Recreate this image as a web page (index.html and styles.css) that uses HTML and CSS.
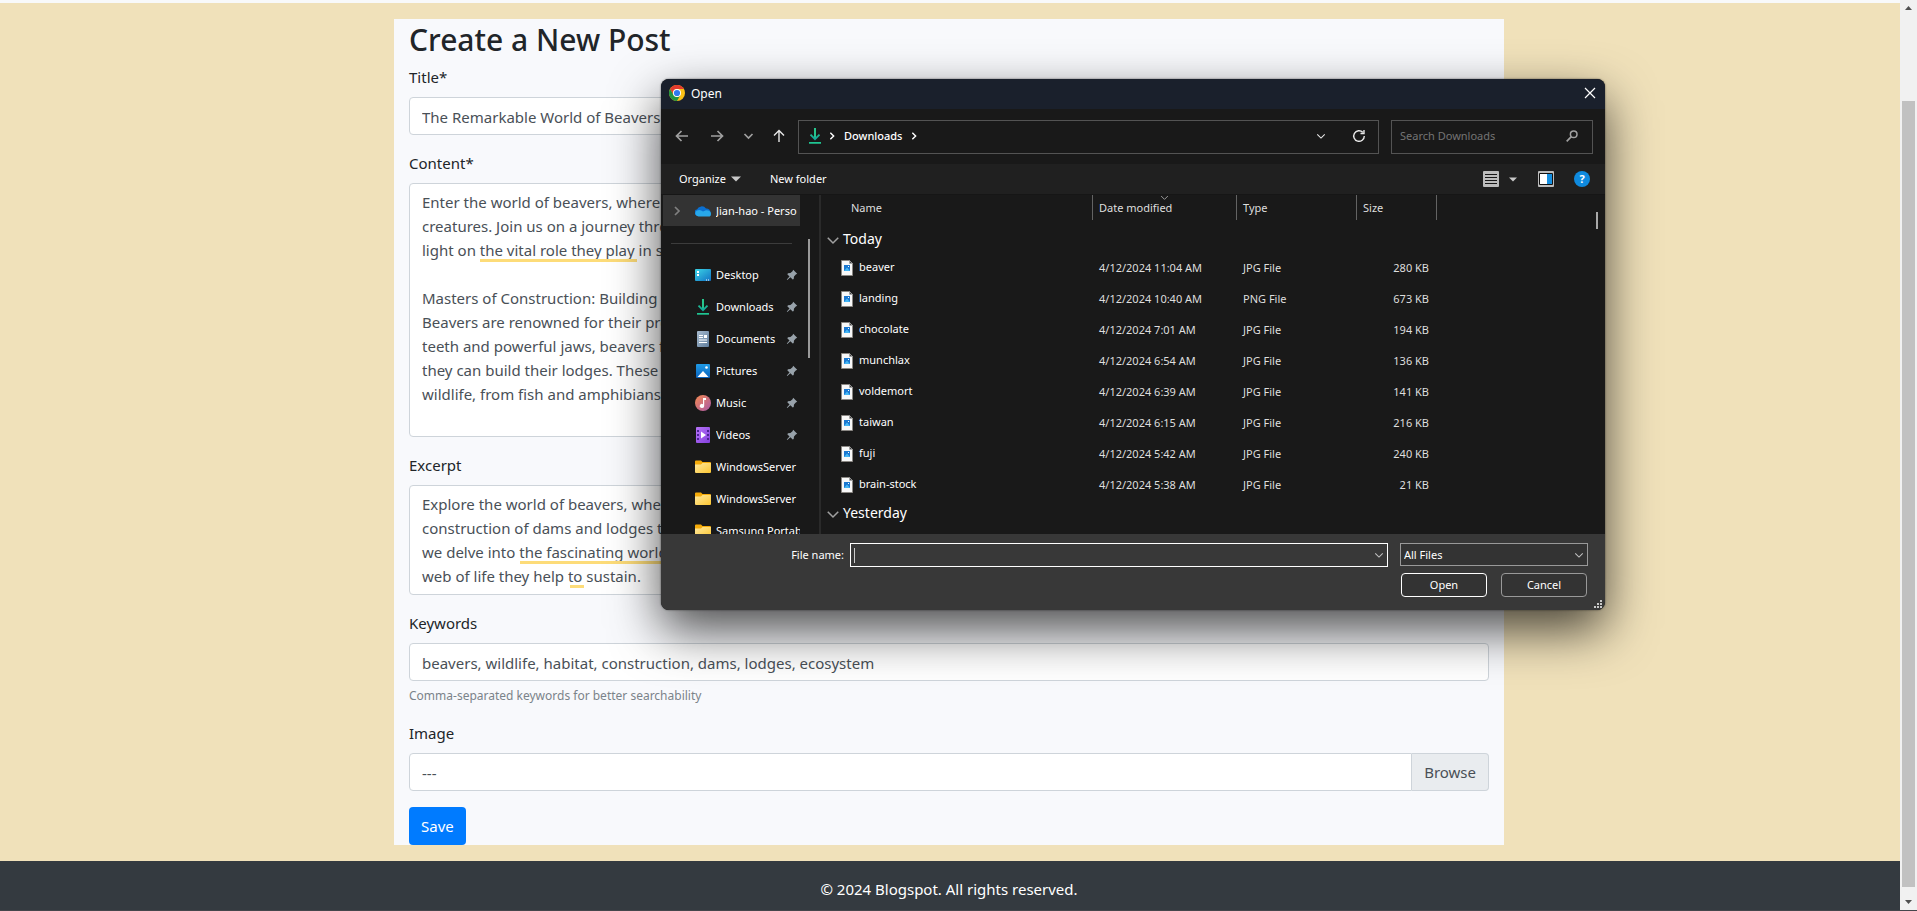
FILE: index.html
```html
<!DOCTYPE html>
<html lang="en">
<head>
<meta charset="utf-8">
<title>Create a New Post</title>
<link rel="stylesheet" href="styles.css">
</head>
<body>
<svg class="defs" aria-hidden="true">
  <defs>
    <linearGradient id="g-dl" x1="0" y1="0" x2="0" y2="1"><stop offset="0" stop-color="#2fd08a"/><stop offset="1" stop-color="#12a89a"/></linearGradient>
    <linearGradient id="g-desk" x1="0" y1="0" x2="1" y2="1"><stop offset="0" stop-color="#3bd5e6"/><stop offset="1" stop-color="#1272c4"/></linearGradient>
    <linearGradient id="g-doc" x1="0" y1="0" x2="1" y2="1"><stop offset="0" stop-color="#a9bccf"/><stop offset="1" stop-color="#5f7d9c"/></linearGradient>
    <linearGradient id="g-pic" x1="0" y1="0" x2="0" y2="1"><stop offset="0" stop-color="#1f9be6"/><stop offset="1" stop-color="#0a62bd"/></linearGradient>
    <linearGradient id="g-mus" x1="0" y1="0" x2="1" y2="1"><stop offset="0" stop-color="#f58a50"/><stop offset="1" stop-color="#a858a8"/></linearGradient>
    <linearGradient id="g-vid" x1="0" y1="0" x2="1" y2="1"><stop offset="0" stop-color="#b673f8"/><stop offset="1" stop-color="#8440dd"/></linearGradient>
    <linearGradient id="g-fold" x1="0" y1="0" x2="1" y2="1"><stop offset="0" stop-color="#ffe9a0"/><stop offset="1" stop-color="#fcc631"/></linearGradient>
    <symbol id="i-download" viewBox="0 0 16 16"><path d="M8 0v11M3.500 6.700 8 11.200l4.500-4.500" fill="none" stroke="url(#g-dl)" stroke-width="1.800"/><path d="M7.100 0h1.800v9H7.100z" fill="#28c78e"/><path d="M2 14h12v1.700H2z" fill="#1fc592"/></symbol>
    <symbol id="i-desktop" viewBox="0 0 16 16"><rect y="2" width="16" height="12" rx="1" fill="url(#g-desk)"/><path d="M2 4h2v2H2zM2 7h2v2H2zM11 12.500h1v1h-1zM13 12.500h1v1h-1z" fill="#fff"/></symbol>
    <symbol id="i-document" viewBox="0 0 16 16"><rect x="2" width="12" height="16" rx="1" fill="url(#g-doc)"/><path d="M4 4h4v1H4zM4 6h4v1H4zM9 4h3v3H9zM4 8.500h8v1H4zM4 11h8v1H4z" fill="#fff"/></symbol>
    <symbol id="i-picture" viewBox="0 0 16 16"><rect x="1" y="1" width="14" height="14" rx="1" fill="url(#g-pic)"/><path d="M2.500 14 8 8l5.500 6z" fill="#fff"/><circle cx="11.500" cy="4.500" r="1.300" fill="#fff"/></symbol>
    <symbol id="i-music" viewBox="0 0 16 16"><circle cx="8" cy="8" r="8" fill="url(#g-mus)"/><path d="M8 3h3v2H9.200v6a2.200 2 0 1 1-1.200-1.800z" fill="#fff"/></symbol>
    <symbol id="i-video" viewBox="0 0 16 16"><rect x="1" width="14" height="16" rx="1" fill="url(#g-vid)"/><path d="M2 3h2v2H2zM2 7h2v2H2zM2 11h2v2H2zM12 3h2v2h-2zM12 7h2v2h-2zM12 11h2v2h-2z" fill="#4a2391"/><path d="m6 4.500 5 3.500-5 3.500z" fill="#fff"/></symbol>
    <symbol id="i-folder" viewBox="0 0 16 16"><path d="M0 2.500Q0 1.500 1 1.500h5l1.500 1.500H15q1 0 1 1V8H0z" fill="#f5ab09"/><path d="M0 5.500h6L7.500 4H16v9q0 1-1 1H1q-1 0-1-1z" fill="url(#g-fold)"/></symbol>
    <symbol id="i-pin" viewBox="0 0 12 12"><path d="M7.200.8 11.200 4.800 9.800 5.600 8 7.600 7.700 9.900 6.700 10.500 4.400 8.300 1.300 11 .8 10.600 3.500 7.400 1.300 5.200 2 4.200 4.400 4 6.500 2.200z" fill="#98a2aa"/></symbol>
    <symbol id="i-image" viewBox="0 0 12 16"><path d="M.5.500h8l3 3v12H.500z" fill="#f8f8f8" stroke="#8a8783"/><path d="M8.500.500v3h3z" fill="#444" stroke="#aaa" stroke-width=".6"/><path d="M3 5h6v6H3z" fill="#1c78d0"/><path d="m3 11 3-3.500L9 11z" fill="#45b7f4"/><path d="M7 6h1v1H7z" fill="#fff"/></symbol>
    <symbol id="i-down" viewBox="0 0 12 12"><path d="m1.500 4 4.500 4.500L10.500 4" fill="none" stroke="currentColor" stroke-width="1.300"/></symbol>
    <symbol id="i-right" viewBox="0 0 12 12"><path d="m4 2 4 4-4 4" fill="none" stroke="currentColor" stroke-width="1.700"/></symbol>
    <symbol id="i-caret" viewBox="0 0 10 6"><path d="M0 .5h10l-5 5z" fill="currentColor"/></symbol>
  </defs>
</svg>

<div class="window">
  <div class="page">
    <main class="main">
      <form class="card">
        <h1 class="heading">Create a New Post</h1>
        <div class="group">
          <label for="title">Title*</label>
          <input class="control" id="title" type="text" value="The Remarkable World of Beavers: Nature's Engineers">
        </div>
        <div class="group">
          <label for="content">Content*</label>
          <div class="field">
            <textarea class="control" id="content" rows="10" wrap="off">Enter the world of beavers, where
creatures. Join us on a journey through
light on the vital role they play in shaping

Masters of Construction: Building their
Beavers are renowned for their prowess
teeth and powerful jaws, beavers fell
they can build their lodges. These
wildlife, from fish and amphibians</textarea>
            <span class="mark mark-vital"></span>
          </div>
        </div>
        <div class="group">
          <label for="excerpt">Excerpt</label>
          <div class="field">
            <textarea class="control" id="excerpt" rows="4" wrap="off">Explore the world of beavers, where
construction of dams and lodges that
we delve into the fascinating world
web of life they help to sustain.</textarea>
            <span class="mark mark-world"></span>
            <span class="mark mark-to"></span>
          </div>
        </div>
        <div class="group">
          <label for="keywords">Keywords</label>
          <input class="control" id="keywords" type="text" value="beavers, wildlife, habitat, construction, dams, lodges, ecosystem">
          <small class="help">Comma-separated keywords for better searchability</small>
        </div>
        <div class="group">
          <label for="image">Image</label>
          <div class="file">
            <input class="control" id="image" type="text" value="---" readonly>
            <button class="browse" type="button">Browse</button>
          </div>
        </div>
        <button class="save" type="button">Save</button>
      </form>
    </main>
    <footer class="footer">© 2024 Blogspot. All rights reserved.</footer>
  </div>
  <div class="scrollbar" aria-hidden="true">
    <svg width="7" height="4" viewBox="0 0 7 4"><path d="M0 4h7L3.500 0z" fill="#505050"/></svg>
    <div class="thumb"></div>
    <svg width="7" height="4" viewBox="0 0 7 4"><path d="M0 0h7L3.500 4z" fill="#505050"/></svg>
  </div>
</div>

<section class="dialog" role="dialog" aria-label="Open">
  <header class="titlebar">
    <svg width="16" height="16" viewBox="0 0 16 16"><circle cx="8" cy="8" r="8" fill="#fbc116"/><path d="M1.070 4A8 8 0 0 1 14.930 4H8a4 4 0 0 0-3.464 6z" fill="#e33b2e"/><path d="M1.070 4A8 8 0 0 0 8 16l3.464-6A4 4 0 0 1 4.536 10z" fill="#229342"/><circle cx="8" cy="8" r="4" fill="#fff"/><circle cx="8" cy="8" r="3.100" fill="#3079ee"/></svg>
    <h2>Open</h2>
    <button class="icon-btn" type="button" aria-label="Close"><svg width="12" height="12" viewBox="0 0 12 12"><path d="m1 1 10 10M11 1 1 11" stroke="#fff" stroke-width="1.200"/></svg></button>
  </header>

  <div class="nav">
    <div class="arrows">
      <button class="icon-btn dim" type="button" aria-label="Back"><svg width="14" height="14" viewBox="0 0 14 14"><path d="M13 7H1.500M6.500 2l-5 5 5 5" fill="none" stroke="currentColor" stroke-width="1.700"/></svg></button>
      <button class="icon-btn dim" type="button" aria-label="Forward"><svg width="14" height="14" viewBox="0 0 14 14"><path d="M1 7h11.500M7.500 2l5 5-5 5" fill="none" stroke="currentColor" stroke-width="1.700"/></svg></button>
      <button class="icon-btn dim recent" type="button" aria-label="Recent locations"><svg width="11" height="12" viewBox="0 0 11 12"><path d="m1.500 4 4 4 4-4" fill="none" stroke="currentColor" stroke-width="1.700"/></svg></button>
      <button class="icon-btn" type="button" aria-label="Up"><svg width="14" height="14" viewBox="0 0 14 14"><path d="M7 13V1.500M2 6.500l5-5 5 5" fill="none" stroke="currentColor" stroke-width="1.400"/></svg></button>
    </div>
    <div class="address">
      <svg width="16" height="16"><use href="#i-download"/></svg>
      <svg class="crumb" width="10" height="10"><use href="#i-right"/></svg>
      <a href="#">Downloads</a>
      <svg class="crumb" width="10" height="10"><use href="#i-right"/></svg>
      <button class="icon-btn history" type="button" aria-label="Previous locations"><svg width="10" height="10"><use href="#i-down"/></svg></button>
      <button class="icon-btn" type="button" aria-label="Refresh"><svg width="14" height="14" viewBox="0 0 14 14"><path d="M12.300 7A5.300 5.300 0 1 1 10.800 3.300M12 1v3.500H8.500" fill="none" stroke="currentColor" stroke-width="1.400"/></svg></button>
    </div>
    <div class="search">
      <input type="text" placeholder="Search Downloads" aria-label="Search Downloads">
      <svg width="12" height="12" viewBox="0 0 12 12"><circle cx="7.700" cy="4.300" r="3.300" fill="none" stroke="#a0a0a0" stroke-width="1.500"/><path d="M5.300 6.700.7 11.300" stroke="#a0a0a0" stroke-width="1.700"/></svg>
    </div>
  </div>

  <div class="toolbar">
    <button type="button">Organize <svg width="10" height="6"><use href="#i-caret"/></svg></button>
    <button type="button">New folder</button>
    <div class="tools">
      <button class="icon-btn" type="button" aria-label="View"><svg width="16" height="16" viewBox="0 0 16 16"><rect width="16" height="16" rx="1" fill="#bcbcbc"/><path d="M2 3.500h12M2 6.500h12M2 9.500h12M2 12.500h12" stroke="#161616"/></svg></button>
      <button class="icon-btn dim" type="button" aria-label="More views"><svg width="8" height="5"><use href="#i-caret"/></svg></button>
      <button class="icon-btn preview" type="button" aria-label="Preview pane"><svg width="16" height="16" viewBox="0 0 16 16"><rect width="16" height="16" rx="1" fill="#bcbcbc"/><path d="M1.500 2.500h13v11h-13z" fill="#fff" stroke="#111"/><path d="M9 3h5v10H9z" fill="#158fe0"/></svg></button>
      <button class="help-btn" type="button" aria-label="Help">?</button>
    </div>
  </div>

  <div class="body">
    <nav class="side">
      <a class="drive" href="#">
        <svg class="expand" width="12" height="12"><use href="#i-right"/></svg>
        <svg width="16" height="16" viewBox="0 0 16 16"><path d="M3 12.500a3 3 0 0 1-1-6 5 4.500 0 0 1 9-1 4 4 0 0 1 4.500 4z" fill="#0a6fd0"/><path d="M3.500 13.500a3.200 3.200 0 0 1-1.500-6Q5 6 8 8.500l3-1.200q5 0 5 3.500a2.700 2.700 0 0 1-3 2.700z" fill="#28a8ea"/></svg>
        <span>Jian-hao - Perso</span>
      </a>
      <hr>
      <ul>
        <li><a href="#"><svg width="16" height="16"><use href="#i-desktop"/></svg><span>Desktop</span><svg class="pin" width="12" height="12"><use href="#i-pin"/></svg></a></li>
        <li><a href="#"><svg width="16" height="16"><use href="#i-download"/></svg><span>Downloads</span><svg class="pin" width="12" height="12"><use href="#i-pin"/></svg></a></li>
        <li><a href="#"><svg width="16" height="16"><use href="#i-document"/></svg><span>Documents</span><svg class="pin" width="12" height="12"><use href="#i-pin"/></svg></a></li>
        <li><a href="#"><svg width="16" height="16"><use href="#i-picture"/></svg><span>Pictures</span><svg class="pin" width="12" height="12"><use href="#i-pin"/></svg></a></li>
        <li><a href="#"><svg width="16" height="16"><use href="#i-music"/></svg><span>Music</span><svg class="pin" width="12" height="12"><use href="#i-pin"/></svg></a></li>
        <li><a href="#"><svg width="16" height="16"><use href="#i-video"/></svg><span>Videos</span><svg class="pin" width="12" height="12"><use href="#i-pin"/></svg></a></li>
        <li><a href="#"><svg width="16" height="16"><use href="#i-folder"/></svg><span>WindowsServer</span></a></li>
        <li><a href="#"><svg width="16" height="16"><use href="#i-folder"/></svg><span>WindowsServer</span></a></li>
        <li><a href="#"><svg width="16" height="16"><use href="#i-folder"/></svg><span>Samsung Portab</span></a></li>
      </ul>
    </nav>
    <div class="side-scroll"></div>
    <div class="files">
      <table>
        <colgroup><col class="c-name"><col class="c-date"><col class="c-type"><col class="c-size"><col></colgroup>
        <thead>
          <tr><th><span>Name</span></th><th><span>Date modified<svg class="sort" width="9" height="9"><use href="#i-down"/></svg></span></th><th><span>Type</span></th><th><span>Size</span></th><th><span></span></th></tr>
        </thead>
        <tbody>
          <tr class="section"><td colspan="5"><svg width="14" height="14"><use href="#i-down"/></svg>Today</td></tr>
          <tr><td><svg width="12" height="16"><use href="#i-image"/></svg>beaver</td><td>4/12/2024 11:04 AM</td><td>JPG File</td><td>280 KB</td><td></td></tr>
          <tr><td><svg width="12" height="16"><use href="#i-image"/></svg>landing</td><td>4/12/2024 10:40 AM</td><td>PNG File</td><td>673 KB</td><td></td></tr>
          <tr><td><svg width="12" height="16"><use href="#i-image"/></svg>chocolate</td><td>4/12/2024 7:01 AM</td><td>JPG File</td><td>194 KB</td><td></td></tr>
          <tr><td><svg width="12" height="16"><use href="#i-image"/></svg>munchlax</td><td>4/12/2024 6:54 AM</td><td>JPG File</td><td>136 KB</td><td></td></tr>
          <tr><td><svg width="12" height="16"><use href="#i-image"/></svg>voldemort</td><td>4/12/2024 6:39 AM</td><td>JPG File</td><td>141 KB</td><td></td></tr>
          <tr><td><svg width="12" height="16"><use href="#i-image"/></svg>taiwan</td><td>4/12/2024 6:15 AM</td><td>JPG File</td><td>216 KB</td><td></td></tr>
          <tr><td><svg width="12" height="16"><use href="#i-image"/></svg>fuji</td><td>4/12/2024 5:42 AM</td><td>JPG File</td><td>240 KB</td><td></td></tr>
          <tr><td><svg width="12" height="16"><use href="#i-image"/></svg>brain-stock</td><td>4/12/2024 5:38 AM</td><td>JPG File</td><td>21 KB</td><td></td></tr>
          <tr class="section"><td colspan="5"><svg width="14" height="14"><use href="#i-down"/></svg>Yesterday</td></tr>
        </tbody>
      </table>
    </div>
    <div class="list-scroll"></div>
  </div>

  <footer class="actions">
    <label for="filename">File name:</label>
    <div class="combo">
      <span class="text-caret"></span>
      <input id="filename" type="text">
      <svg width="10" height="10"><use href="#i-down"/></svg>
    </div>
    <div class="choices">
      <div class="filter">
        <select aria-label="File type"><option>All Files</option></select>
        <svg width="10" height="10"><use href="#i-down"/></svg>
      </div>
      <div class="buttons">
        <button class="primary" type="button">Open</button>
        <button type="button">Cancel</button>
      </div>
    </div>
    <svg class="grip" width="8" height="8" viewBox="0 0 8 8"><path d="M6 0h2v2H6zM3 3h2v2H3zM6 3h2v2H6zM0 6h2v2H0zM3 6h2v2H3zM6 6h2v2H6z" fill="#c8c8c8"/></svg>
  </footer>
</section>
</body>
</html>
```

FILE: styles.css
```css
* { box-sizing: border-box; }

body {
  margin: 0;
  overflow: hidden;
  font: 15px/24px "Noto Sans", "Open Sans", sans-serif;
  color: #212529;
}

button, input, textarea, select { font: inherit; color: inherit; margin: 0; }
button { background: none; border: 0; padding: 0; }
input, textarea, select { outline: 0; }
a { color: inherit; text-decoration: none; }
svg { display: block; flex: none; }
.defs { position: absolute; width: 0; height: 0; }

/* Blog page */
.window {
  display: flex;
  height: 100vh;
  border-bottom: 1px solid #44464b;
}
.page {
  flex: 1;
  display: flex;
  flex-direction: column;
  min-width: 0;
  border-top: 3px solid #f8f9fa;
  background: #f0e1ba;
}
.main { flex: 1; padding: 16px 2px 16px 0; }
.card {
  max-width: 1110px;
  margin: 0 auto;
  padding: 0 15px;
  background: #f8f9fc;
}
.heading { margin: 0; padding: 2px 0 6px; font-size: 30px; line-height: 38px; font-weight: 500; }
.group { margin-bottom: 16px; }
.group label { display: block; margin-bottom: 8px; }
.control {
  display: block;
  width: 100%;
  padding: 6px 12px;
  border: 1px solid #ced4da;
  border-radius: 4px;
  background: #fff;
  color: #495057;
}
input.control { height: 38px; padding: 7px 12px 5px; }
textarea.control { resize: none; overflow: hidden; }
.field { position: relative; }
.mark { position: absolute; height: 3px; background: #fddc79; }
.mark-vital { left: 71px; top: 76px; width: 157px; }
.mark-world { left: 111px; top: 76px; width: 156px; }
.mark-to { left: 161px; top: 100px; width: 14px; }
.help { display: block; padding-top: 5px; font-size: 12px; line-height: 19px; color: #7b838a; }
.file { display: flex; }
.file .control { flex: 1; border-radius: 4px 0 0 4px; }
.browse {
  padding: 0 12px;
  border: 1px solid #ced4da;
  border-left: 0;
  border-radius: 0 4px 4px 0;
  background: #e9ecef;
  color: #495057;
}
.save {
  display: block;
  height: 38px;
  padding: 0 12px;
  border-radius: 4px;
  background: #007bff;
  color: #fff;
}
.footer { padding: 16px 2px 9px 0; background: #343a40; color: #fff; text-align: center; }

.scrollbar {
  display: flex;
  flex-direction: column;
  align-items: center;
  width: 17px;
  padding: 6px 0;
  background: #f1f1f1;
}
.thumb { flex: 1; width: 13px; margin: 91px 0 13px; background: #c1c1c1; }

/* File picker */
.dialog {
  position: absolute;
  left: 661px;
  top: 79px;
  width: 944px;
  display: flex;
  flex-direction: column;
  border-radius: 8px;
  overflow: hidden;
  background: #191919;
  color: #fff;
  font-size: 11px;
  line-height: 16px;
  box-shadow: 0 0 2px rgba(0, 0, 0, .6), 0 20px 50px rgba(0, 0, 0, .7);
}
.icon-btn { display: grid; place-items: center; color: #e8e8e8; }
.dim { color: #a0a0a0; }

.titlebar {
  display: flex;
  align-items: center;
  gap: 6px;
  height: 30px;
  padding: 0 9px 2px 8px;
  background: #1a202c;
}
.titlebar h2 { flex: 1; margin: 0; padding-top: 1px; font-size: 12px; font-weight: 400; }

.nav { display: flex; align-items: center; height: 55px; padding: 0 12px 0 14px; }
.arrows { display: flex; align-items: center; gap: 18px; width: 123px; padding-bottom: 2px; }
.recent { margin-left: 1px; }
.arrows .dim + .dim:not(.recent) { margin-left: 3px; }
.address {
  flex: 1;
  display: flex;
  align-items: center;
  height: 34px;
  margin-right: 12px;
  padding: 0 12px 2px 8px;
  border: 1px solid #535353;
}
.address a { margin: 0 7px; font-weight: 500; }
.crumb { margin-left: 4px; }
.address a + .crumb { margin-left: 0; }
.history { margin: 0 26px 0 auto; }
.search {
  display: flex;
  align-items: center;
  width: 202px;
  height: 34px;
  padding: 0 14px 2px 8px;
  border: 1px solid #535353;
}
.search input { flex: 1; min-width: 0; padding: 0; border: 0; background: none; }
.search input::placeholder { color: #747474; opacity: 1; }

.toolbar {
  display: flex;
  align-items: center;
  gap: 29px;
  height: 31px;
  padding: 0 15px 0 18px;
  background: #202020;
  border-bottom: 1px solid #161616;
}
.toolbar > button { display: flex; align-items: center; gap: 5px; }
.toolbar > button svg { color: #c8c8c8; }
.tools { display: flex; align-items: center; margin-left: auto; }
.tools .dim { margin-left: 10px; color: #c8c8c8; }
.preview { margin-left: 21px; }
.help-btn {
  width: 16px;
  height: 16px;
  margin-left: 20px;
  border-radius: 50%;
  background: #0f8ade;
  font-weight: 700;
}

.body { display: flex; height: 339px; }
.side { width: 139px; padding-left: 2px; overflow: hidden; }
.side a { display: flex; align-items: center; height: 32px; white-space: nowrap; }
.side span { flex: 1; margin-left: 5px; overflow: hidden; }
.side .drive { height: 31px; padding-left: 8px; background: #333; }
.expand { margin-right: 12px; color: #808080; }
.side hr { height: 1px; margin: 17px 8px 15px; border: 0; background: #3c3c3c; }
.side ul { margin: 0; padding: 0; list-style: none; }
.side li a { padding-left: 32px; }
.pin { margin-right: 2px; }
.side-scroll { width: 2px; height: 119px; margin: 44px 9px 0 8px; background: #9a9a9a; }
.files { flex: 1; min-width: 0; overflow: hidden; border-left: 2px solid #2a2a2a; }
.files table { width: 100%; border-collapse: collapse; table-layout: fixed; }
.c-name { width: 271px; }
.c-date { width: 144px; }
.c-type { width: 120px; }
.c-size { width: 80px; }
.files th { padding: 0 0 6px; font-weight: 400; text-align: left; color: #dedede; }
.files th span {
  display: block;
  position: relative;
  height: 25px;
  padding-left: 6px;
  border-left: 1px solid #636363;
  line-height: 25px;
}
.files th:first-child span { padding-left: 30px; border: 0; }
.sort { position: absolute; left: 67px; top: -2px; color: #999; }
.files td { height: 31px; padding: 0 0 0 7px; color: #dedede; }
.files td:first-child { padding-left: 20px; color: #fff; }
.files td:nth-child(4) { padding-right: 7px; text-align: right; }
.files td svg { display: inline-block; margin-right: 6px; vertical-align: middle; }
.files .section td { height: 26px; padding-left: 5px; font-size: 14px; }
.section svg { color: #a0a0a0; }
.files .section td svg { margin-right: 3px; }
.list-scroll { width: 2px; height: 17px; margin: 17px 7px 0 0; background: #a8a8a8; }

.actions {
  position: relative;
  display: flex;
  align-items: flex-start;
  height: 76px;
  padding: 9px 17px 0 0;
  background: #383838;
}
.actions label { width: 189px; padding-right: 6px; line-height: 24px; text-align: right; }
.combo {
  flex: 1;
  display: flex;
  align-items: center;
  height: 24px;
  padding: 0 3px;
  border: 1px solid #fff;
}
.combo input { flex: 1; min-width: 0; padding: 0; border: 0; background: none; }
.combo svg, .filter svg { color: #c0c0c0; }
.text-caret { width: 1px; height: 15px; background: #ccc; }
.choices { width: 188px; margin-left: 12px; }
.filter { position: relative; }
.filter select {
  display: block;
  width: 100%;
  height: 23px;
  padding: 0 3px;
  border: 1px solid #999;
  border-radius: 0;
  appearance: none;
  background: #333;
}
.filter svg { position: absolute; right: 4px; top: 7px; }
.buttons { display: flex; gap: 14px; padding: 7px 1px 0; }
.buttons button {
  flex: 1;
  height: 24px;
  border: 1px solid #999;
  border-radius: 4px;
  background: #333;
}
.buttons .primary { border-color: #fff; }
.grip { position: absolute; right: 3px; bottom: 2px; }
```
